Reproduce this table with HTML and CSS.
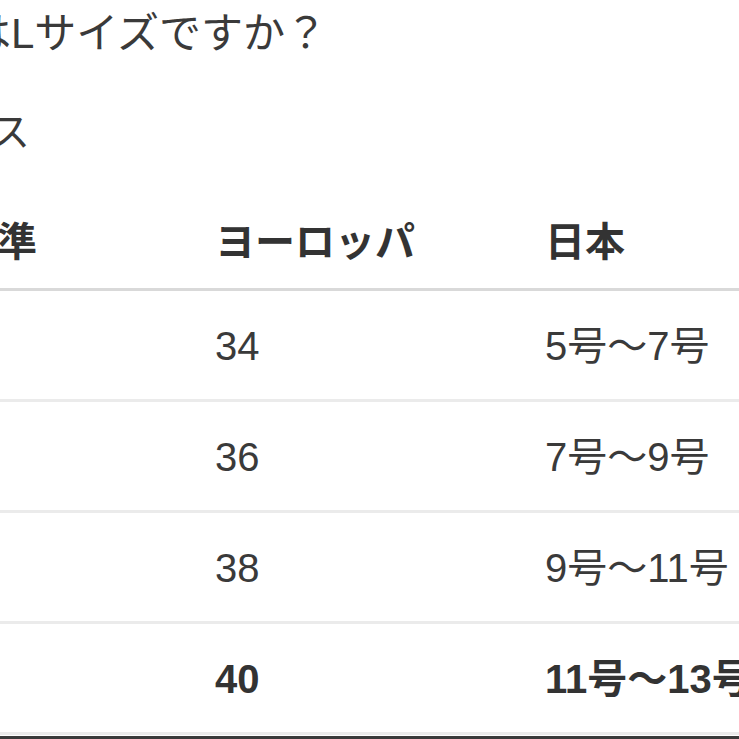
FILE: index.html
```html
<!DOCTYPE html>
<html lang="ja">
<head>
<meta charset="utf-8">
<title>サイズ表</title>
<link rel="stylesheet" href="styles.css">
</head>
<body>
<main class="page">
  <p class="question">このドレスはLサイズですか？</p>
  <p class="answer">カテゴリ：ドレス</p>
  <table class="size-table">
    <thead>
      <tr>
        <th class="col-a">国際基準</th>
        <th class="col-b">ヨーロッパ</th>
        <th class="col-c">日本</th>
      </tr>
    </thead>
    <tbody>
      <tr><td>XS</td><td>34</td><td>5号〜7号</td></tr>
      <tr><td>S</td><td>36</td><td>7号〜9号</td></tr>
      <tr><td>M</td><td>38</td><td>9号〜11号</td></tr>
      <tr class="highlight"><td>L</td><td>40</td><td>11号〜13号</td></tr>
    </tbody>
  </table>
  <div class="bottom-bar"></div>
</main>
</body>
</html>
```

FILE: styles.css
```css
html, body {
  margin: 0;
  padding: 0;
  overflow: hidden;
  background: #ffffff;
}

body {
  width: 739px;
  height: 739px;
  font-family: "Liberation Sans", "Noto Sans CJK JP", sans-serif;
  color: #3a3a3a;
  font-size: 40px;
}

.page {
  display: flex;
  flex-direction: column;
  white-space: nowrap;
}

.question {
  margin: 0 0 0 -241px;
  font-size: 42px;
  line-height: 68px;
}

.answer {
  margin: 31px 0 0 -290px;
  line-height: 66px;
}

.size-table {
  margin: 21px 0 0 -123px;
  border-collapse: collapse;
  table-layout: fixed;
  width: 968px;
}

.size-table th,
.size-table td {
  text-align: left;
  padding: 0;
  line-height: 40px;
  white-space: nowrap;
}

.col-a { width: 338px; }
.col-b { width: 330px; }
.col-c { width: 300px; }

.size-table th {
  font-weight: bold;
  color: #333333;
  padding-top: 36px;
  padding-bottom: 26px;
  border-bottom: 3px solid #d9d9d9;
}

.size-table td {
  padding-top: 35px;
  padding-bottom: 33px;
  border-bottom: 3px solid #ebebeb;
}

.size-table .highlight td {
  font-weight: bold;
  color: #333333;
}

.bottom-bar {
  height: 4px;
  margin-top: 1px;
  background: #3a3a3a;
}
```
